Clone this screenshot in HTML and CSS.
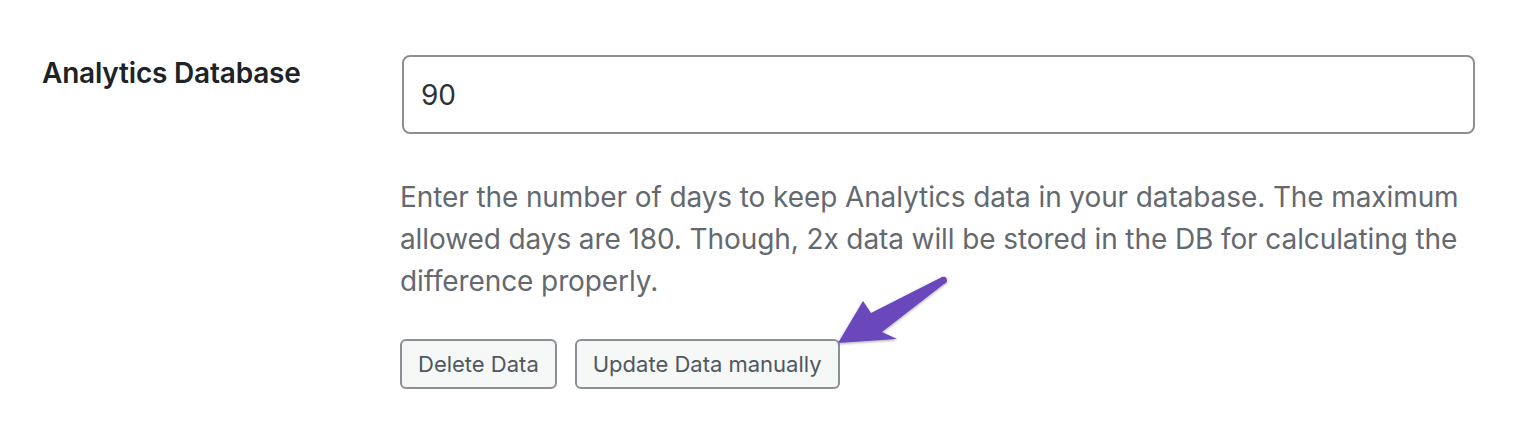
FILE: index.html
```html
<!DOCTYPE html>
<html lang="en">
<head>
<meta charset="utf-8">
<title>Analytics Database</title>
<link rel="stylesheet" href="styles.css">
</head>
<body>
<div class="row">
  <div class="label">Analytics Database</div>
  <div class="field">
    <input class="input" type="text" value="90">
    <p class="desc">Enter the number of days to keep Analytics data in your database. The maximum allowed days are 180. Though, 2x data will be stored in the DB for calculating the difference properly.</p>
    <div class="buttons">
      <button class="btn" type="button">Delete Data</button>
      <button class="btn btn-update" type="button">Update Data manually</button>
      <svg class="arrow" width="130" height="90" viewBox="0 0 130 90" aria-hidden="true">
        <defs>
          <filter id="sh" x="-20%" y="-20%" width="140%" height="140%">
            <feGaussianBlur in="SourceAlpha" stdDeviation="1.5"/>
            <feOffset dx="0" dy="1"/>
            <feComponentTransfer><feFuncA type="linear" slope="0.35"/></feComponentTransfer>
            <feMerge><feMergeNode/><feMergeNode in="SourceGraphic"/></feMerge>
          </filter>
        </defs>
        <path filter="url(#sh)" fill="#6b47bb" d="M2 70 L27 28 L35 40 L106 4 Q111 3 111 8 Q111 10 108 11 L46 59 L61 66 Z"/>
      </svg>
    </div>
  </div>
</div>
</body>
</html>
```
FILE: styles.css
```css
html, body {
  margin: 0;
  padding: 0;
  background: #ffffff;
}
body {
  font-family: Inter, "Noto Sans", "Liberation Sans", sans-serif;
  color: #1d2327;
}
.row {
  display: flex;
  padding-top: 52px;
}
.label {
  width: 358px;
  padding-left: 42px;
  font-size: 28px;
  font-weight: 600;
  line-height: 42px;
  letter-spacing: -0.2px;
  color: #1d2327;
  flex-shrink: 0;
}
.field {
  flex: 1;
  padding-top: 3px;
  padding-right: 43px;
}
.input {
  display: block;
  box-sizing: border-box;
  width: 1073px;
  height: 79px;
  margin: 0 0 0 2px;
  padding: 0 17px;
  border: 2px solid #8c8f94;
  border-radius: 8px;
  font-family: inherit;
  font-size: 28px;
  color: #2c3338;
  background: #ffffff;
  outline: none;
}
.desc {
  margin: 42px 0 0 0;
  font-size: 28px;
  line-height: 42px;
  letter-spacing: -0.1px;
  color: #646970;
  max-width: 1075px;
}
.buttons {
  position: relative;
  display: flex;
  gap: 18px;
  margin-top: 37px;
}
.btn {
  box-sizing: border-box;
  height: 50px;
  padding: 0 16px;
  border: 2px solid #8c8f94;
  border-radius: 6px;
  background: #f6f7f7;
  color: #50575e;
  font-family: inherit;
  font-size: 22px;
  line-height: 46px;
  cursor: pointer;
}
.arrow {
  position: absolute;
  left: 436px;
  top: -66px;
  overflow: visible;
}
```
